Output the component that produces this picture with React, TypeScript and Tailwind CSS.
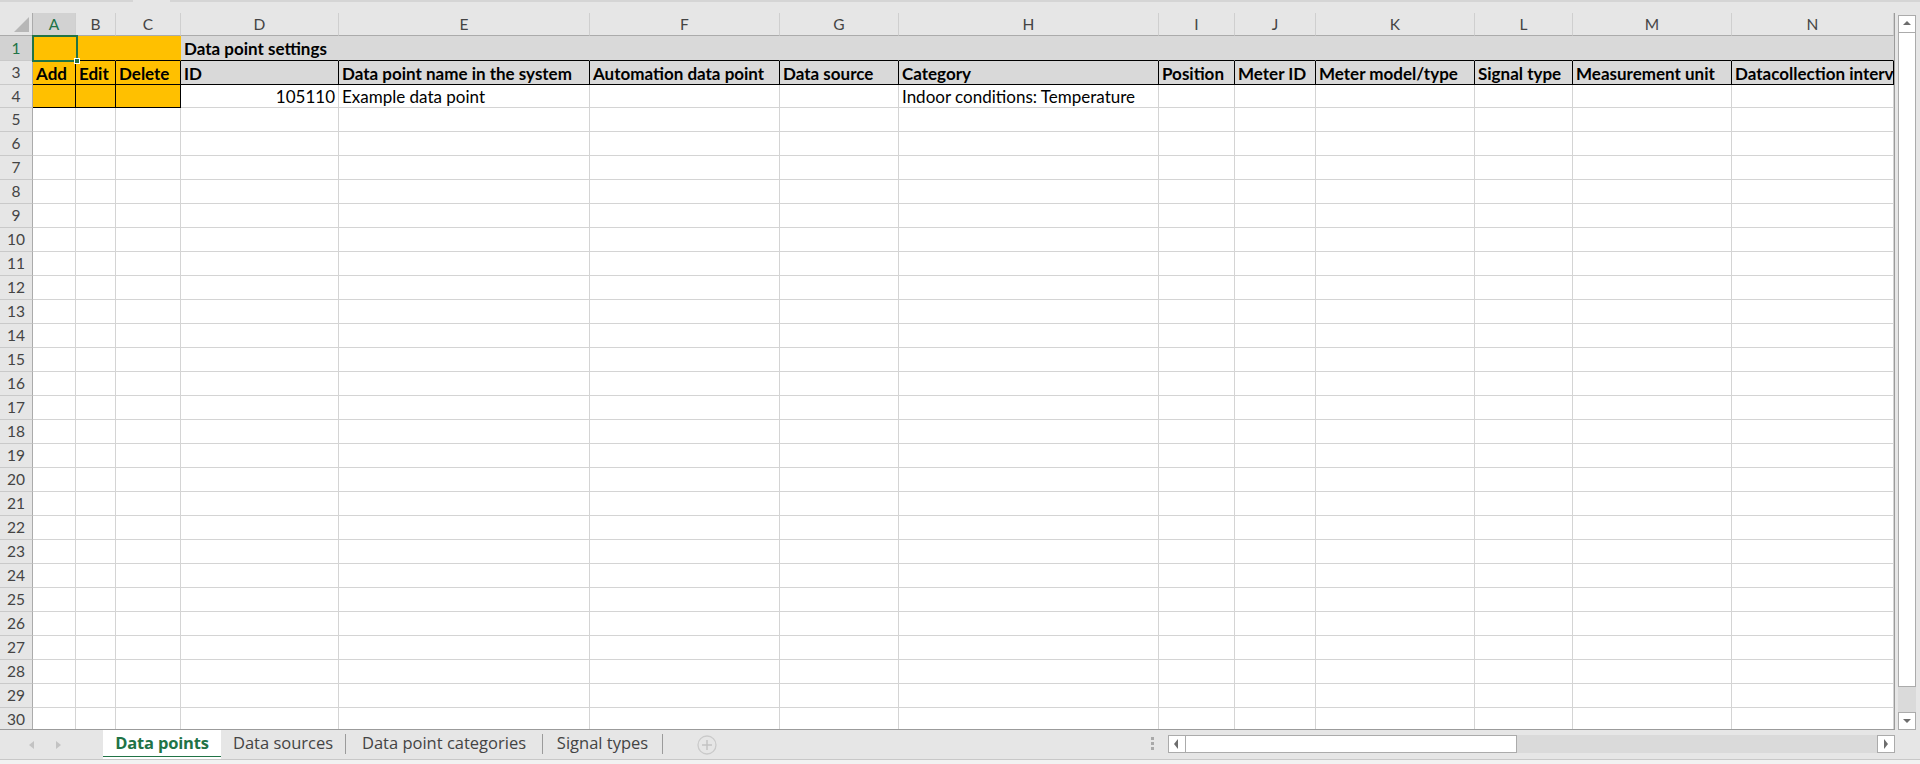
import React from 'react';

const GRID =
  'grid grid-cols-[33px_43px_40px_65px_158px_251px_190px_119px_260px_76px_81px_159px_98px_159px_162px]';

const LETTERS = ['A', 'B', 'C', 'D', 'E', 'F', 'G', 'H', 'I', 'J', 'K', 'L', 'M', 'N'];

const HEADERS = [
  'ID',
  'Data point name in the system',
  'Automation data point',
  'Data source',
  'Category',
  'Position',
  'Meter ID',
  'Meter model/type',
  'Signal type',
  'Measurement unit',
  'Datacollection interval',
];

// other sheet tabs, widths measured from the separator positions
const TABS = [
  { label: 'Data sources', w: 'w-[125px]' },
  { label: 'Data point categories', w: 'w-[197px]' },
  { label: 'Signal types', w: 'w-[120px]' },
];

type CellProps = { children?: React.ReactNode; className?: string };

const Cell = ({ children, className = '' }: CellProps) => (
  <div
    className={`flex items-center overflow-hidden whitespace-nowrap px-[3px] pt-[2px] border-r border-b text-[17px] ${className}`}
  >
    {children}
  </div>
);

const RowHead = ({ n, active = false, h }: { n: number; active?: boolean; h: string }) => (
  <div
    className={`${h} flex items-center justify-center pt-[1px] border-r border-b border-r-[#ababab] border-b-[#c9c9c9] text-[15.5px] ${
      active ? 'bg-[#d2d2d2] text-[#217346]' : 'bg-[#e6e6e6] text-[#444]'
    }`}
  >
    {n}
  </div>
);

const Corner = () => (
  <div className="h-[23px] bg-[#e6e6e6] border-r border-b border-r-[#ababab] border-b-[#ababab] flex items-end justify-end pr-[3px] pb-[3px]">
    <svg width="15" height="15" viewBox="0 0 15 15">
      <polygon points="15,0 15,15 0,15" fill="#b7b7b7" />
    </svg>
  </div>
);

const EmptyRow = ({ n }: { n: number }) => (
  <>
    <RowHead n={n} h="h-[24px]" />
    {LETTERS.map((l) => (
      <Cell key={l} className="h-[24px] bg-white border-[#d4d4d4]" />
    ))}
  </>
);

const ArrowBtn = ({ dir }: { dir: 'up' | 'down' | 'left' | 'right' }) => {
  const pts = {
    up: '2,7 6,3 10,7',
    down: '2,4 10,4 6,8',
    left: '7,1 7,11 3,6',
    right: '4,1 4,11 8,6',
  }[dir];
  return (
    <div className="w-[18px] h-[18px] shrink-0 bg-white border border-[#ababab] flex items-center justify-center">
      <svg width="12" height="12" viewBox="0 0 12 12">
        <polygon points={pts} fill="#6d6d6d" />
      </svg>
    </div>
  );
};

export default function App() {
  return (
    <div className="w-[1920px] h-[764px] overflow-hidden bg-[#e6e6e6] font-['Lato',sans-serif] text-black flex flex-col select-none">
      {/* remains of formula bar */}
      <div className="h-[13px] shrink-0 flex items-start gap-[37px]">
        <div className="w-[133px] h-[2px] bg-[#d5d5d5]" />
        <div className="flex-1 h-[2px] bg-[#d5d5d5]" />
      </div>

      <div className="flex h-[717px] shrink-0">
        <div className="w-[1895px] h-[717px] overflow-hidden bg-white border-r border-b border-[#9b9b9b]">
          <div className={GRID}>
            {/* column letters */}
            <Corner />
            {LETTERS.map((l, i) => (
              <div
                key={l}
                className={`h-[23px] flex items-center justify-center pt-[1px] border-r border-b border-r-[#cfcfcf] border-b-[#ababab] text-[15.5px] ${
                  i === 0 ? 'bg-[#d2d2d2] text-[#217346]' : 'bg-[#e6e6e6] text-[#444]'
                }`}
              >
                {l}
              </div>
            ))}

            {/* row 1 */}
            <RowHead n={1} active h="h-[25px]" />
            <div className="relative h-[25px] bg-[#ffc000] border-b border-black">
              <div className="absolute -left-px -top-px right-[-2px] bottom-[-2px] border-2 border-[#217346]" />
              <div className="absolute right-[-4px] bottom-[-4px] w-[6px] h-[6px] bg-[#217346] border border-white" />
            </div>
            <Cell className="h-[25px] bg-[#ffc000] border-r-[#ffc000] border-b-black" />
            <Cell className="h-[25px] bg-[#ffc000] border-r-[#ffc000] border-b-black" />
            <Cell className="h-[25px] bg-[#d9d9d9] border-r-[#d9d9d9] border-b-black font-bold">
              Data point settings
            </Cell>
            {LETTERS.slice(4).map((l) => (
              <Cell key={l} className="h-[25px] bg-[#d9d9d9] border-r-[#d9d9d9] border-b-black" />
            ))}

            {/* row 3 */}
            <RowHead n={3} h="h-[24px]" />
            {['Add', 'Edit', 'Delete'].map((t) => (
              <Cell key={t} className="h-[24px] bg-[#ffc000] border-black font-bold">
                {t}
              </Cell>
            ))}
            {HEADERS.map((t) => (
              <Cell key={t} className="h-[24px] bg-[#d9d9d9] border-black font-bold">
                {t}
              </Cell>
            ))}

            {/* row 4 */}
            <RowHead n={4} h="h-[23px]" />
            <Cell className="h-[23px] bg-[#ffc000] border-black" />
            <Cell className="h-[23px] bg-[#ffc000] border-black" />
            <Cell className="h-[23px] bg-[#ffc000] border-black" />
            <Cell className="h-[23px] bg-white border-[#d4d4d4] justify-end">105110</Cell>
            <Cell className="h-[23px] bg-white border-[#d4d4d4]">Example data point</Cell>
            <Cell className="h-[23px] bg-white border-[#d4d4d4]" />
            <Cell className="h-[23px] bg-white border-[#d4d4d4]" />
            <Cell className="h-[23px] bg-white border-[#d4d4d4]">Indoor conditions: Temperature</Cell>
            {LETTERS.slice(8).map((l) => (
              <Cell key={l} className="h-[23px] bg-white border-[#d4d4d4]" />
            ))}

            {Array.from({ length: 26 }, (_, i) => (
              <EmptyRow key={i} n={i + 5} />
            ))}
          </div>
        </div>

        {/* vertical scrollbar */}
        <div className="w-[25px] flex flex-col pl-[3px] pt-[2px]">
          <ArrowBtn dir="up" />
          <div className="w-[18px] h-[654px] bg-white border-x border-b border-[#ababab]" />
          <div className="w-[18px] flex-1 bg-[#dadada]" />
          <ArrowBtn dir="down" />
        </div>
      </div>

      {/* sheet tabs */}
      <div className="h-[29px] shrink-0 flex items-stretch font-['Open_Sans',sans-serif] text-[16.5px]">
        <div className="w-[103px] flex items-center pl-[27px] gap-[20px]">
          <svg width="8" height="10" viewBox="0 0 8 10">
            <polygon points="7,1 7,9 2,5" fill="#c3c3c3" />
          </svg>
          <svg width="8" height="10" viewBox="0 0 8 10">
            <polygon points="1,1 1,9 6,5" fill="#c3c3c3" />
          </svg>
        </div>
        <div className="w-[118px] bg-white flex flex-col items-center">
          <div className="flex-1 flex items-center font-bold text-[#217346] pt-[1px] tracking-[-0.2px]">
            Data points
          </div>
          <div className="w-full h-[3px] bg-[#217346] mb-[3px]" />
        </div>
        {TABS.map((t) => (
          <div key={t.label} className={`${t.w} flex items-center`}>
            <div className="flex-1 text-center text-[#444] pb-[3px] whitespace-nowrap">{t.label}</div>
            <div className="w-px h-[20px] bg-[#9b9b9b] mb-[2px]" />
          </div>
        ))}
        <div className="flex items-center pl-[34px]">
          <svg width="20" height="20" viewBox="0 0 20 20">
            <circle cx="10" cy="10" r="9" fill="none" stroke="#cacaca" strokeWidth="1.3" />
            <path d="M10 5 V15 M5 10 H15" stroke="#c3c3c3" strokeWidth="1.5" />
          </svg>
        </div>
        <div className="flex-1" />
        <div className="flex flex-col gap-[2px] justify-center pb-[2px] mr-[14px]">
          <div className="w-[3px] h-[3px] bg-[#a9a9a9]" />
          <div className="w-[3px] h-[3px] bg-[#a9a9a9]" />
          <div className="w-[3px] h-[3px] bg-[#a9a9a9]" />
        </div>
        <div className="w-[727px] flex pt-[5px] h-[23px]">
          <ArrowBtn dir="left" />
          <div className="w-[331px] h-[18px] bg-white border-y border-r border-[#ababab]" />
          <div className="flex-1 h-[18px] bg-[#dadada]" />
          <ArrowBtn dir="right" />
        </div>
        <div className="w-[25px]" />
      </div>

      <div className="flex-1 bg-[#f2f2f2] border-t border-[#c8c8c8]" />
    </div>
  );
}
